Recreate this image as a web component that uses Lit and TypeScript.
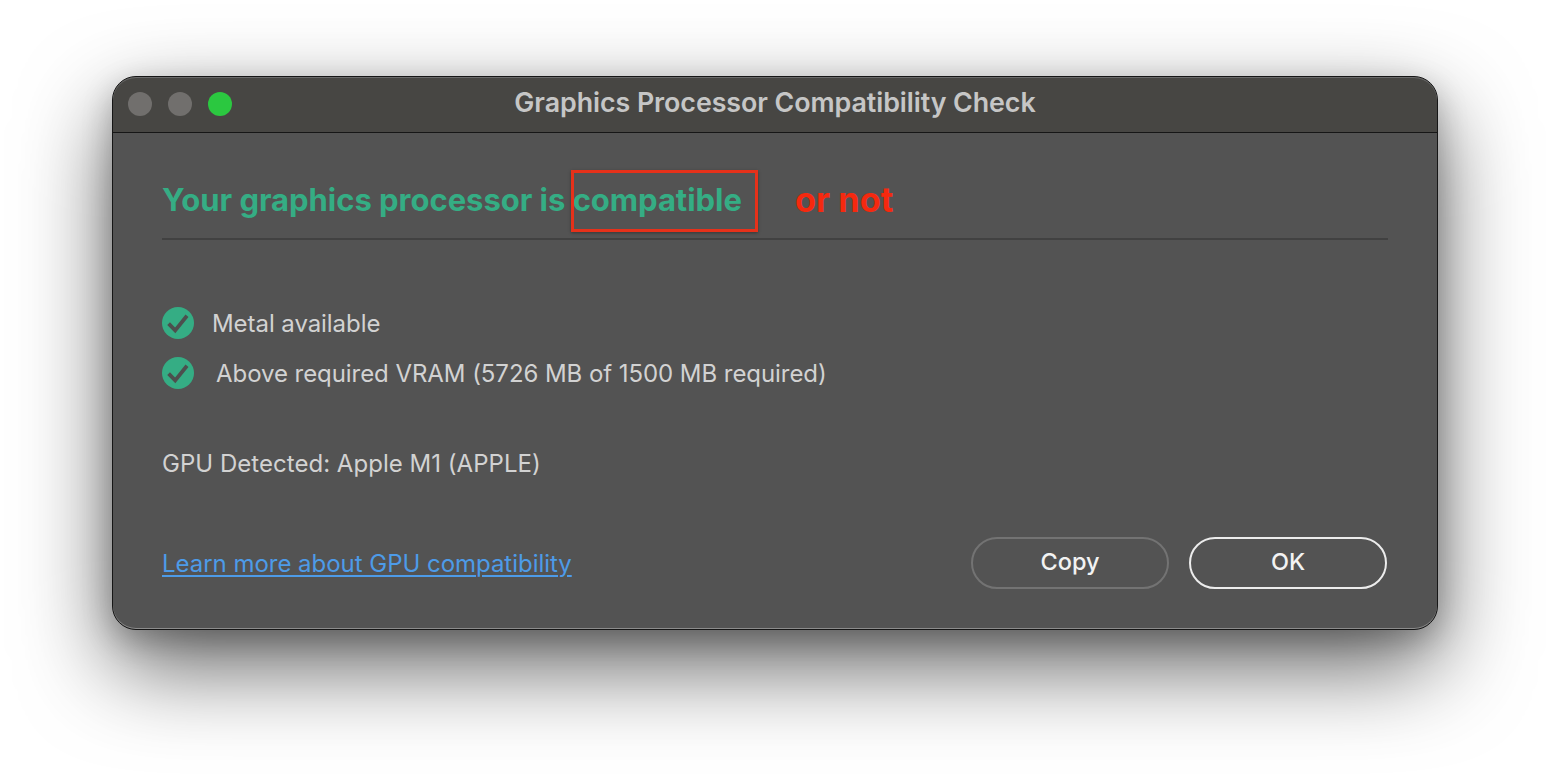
import { LitElement, html, css, svg } from "lit";
import { customElement } from "lit/decorators.js";

const check = svg`<svg class="check" width="32" height="32" viewBox="0 0 32 32"><circle cx="16" cy="16" r="16" fill="#35ad84"/><path d="M6.6 16.6 L13.2 23.4 L25 8.8" fill="none" stroke="#4d4f4e" stroke-width="3.8" stroke-linecap="butt" stroke-linejoin="miter"/></svg>`;

@customElement("app-root")
export class AppRoot extends LitElement {
  static styles = css`
    :host { display: block; width: 1550px; height: 778px; background: #fff; overflow: hidden; font-family: Inter, "Liberation Sans", sans-serif; }
    .page { box-sizing: border-box; height: 778px; padding: 76px 112px 148px; }
    .window { position: relative; box-sizing: border-box; width: 1326px; height: 554px; background: #535353; border-radius: 24px; border: 1px solid #161616; box-shadow: 0 36px 90px rgba(0,0,0,.62), 0 10px 30px rgba(0,0,0,.22); display: flex; flex-direction: column; overflow: hidden; }
    .window::after { content: ""; position: absolute; inset: 0; border-radius: 23px; box-shadow: inset 0 -1px 0 #8c8c8c, inset 0 1px 0 #6a6a6a; pointer-events: none; }
    .titlebar { position: relative; flex: none; height: 56px; box-sizing: border-box; background: #474643; border-bottom: 1px solid #161616; display: flex; align-items: center; justify-content: center; }
    .lights { position: absolute; left: 15px; top: 15px; display: flex; gap: 16px; }
    .light { width: 24px; height: 24px; border-radius: 50%; background: #716f6d; }
    .light.green { background: #2bc840; }
    .title { font-size: 26.8px; font-weight: 600; color: #c6c6c6; margin-top: -6px; letter-spacing: -.06px; }
    .content { flex: 1; display: flex; flex-direction: column; padding: 0 49px; }
    .heading { position: relative; height: 107px; box-sizing: border-box; border-bottom: 2px solid #414141; display: flex; align-items: flex-start; font-size: 31px; font-weight: 700; letter-spacing: -.03px; color: #35ad84; padding-top: 49px; line-height: 36px; }
    .marker { position: absolute; left: 409px; top: 37px; width: 187px; height: 62px; box-sizing: border-box; border: 3px solid #e6311a; box-shadow: 0 1px 3px rgba(0,0,0,.35); }
    .ornot { position: absolute; left: 633px; top: 49px; color: #f5290f; font-size: 34.4px; letter-spacing: 0; }
    .checks { display: flex; flex-direction: column; gap: 18px; margin-top: 67px; }
    .row { display: flex; align-items: center; height: 32px; color: #d2d2d2; font-size: 24px; letter-spacing: -.06px; }
    .check { flex: none; }
    .row span { margin-left: 18px; }
    .row.second span { margin-left: 22px; }
    .gpu { color: #d2d2d2; font-size: 24px; letter-spacing: .03px; margin-top: 59px; height: 32px; line-height: 32px; }
    .footer { margin-top: 57px; display: flex; align-items: center; justify-content: space-between; height: 52px; }
    a { color: #4d9be8; font-size: 24px; letter-spacing: -.03px; text-decoration: underline; text-underline-offset: 3px; text-decoration-thickness: 1.5px; }
    .buttons { display: flex; gap: 20px; margin-right: 1px; }
    button { box-sizing: border-box; width: 198px; height: 52px; border-radius: 26px; background: transparent; font: 500 23.5px Inter, "Liberation Sans", sans-serif; color: #f2f2f2; border: 2px solid #737373; padding: 0 0 4px; }
    button.primary { border-color: #ececec; }
  `;

  render() {
    return html`<div class="page"><div class="window">
      <div class="titlebar">
        <div class="lights"><div class="light"></div><div class="light"></div><div class="light green"></div></div>
        <div class="title">Graphics Processor Compatibility Check</div>
      </div>
      <div class="content">
        <div class="heading">
          <span>Your graphics processor is compatible</span>
          <div class="marker"></div>
          <span class="ornot">or not</span>
        </div>
        <div class="checks">
          <div class="row">${check}<span>Metal available</span></div>
          <div class="row second">${check}<span>Above required VRAM (5726 MB of 1500 MB required)</span></div>
        </div>
        <div class="gpu">GPU Detected: Apple M1 (APPLE)</div>
        <div class="footer">
          <a href="#">Learn more about GPU compatibility</a>
          <div class="buttons"><button>Copy</button><button class="primary">OK</button></div>
        </div>
      </div>
    </div></div>`;
  }
}
